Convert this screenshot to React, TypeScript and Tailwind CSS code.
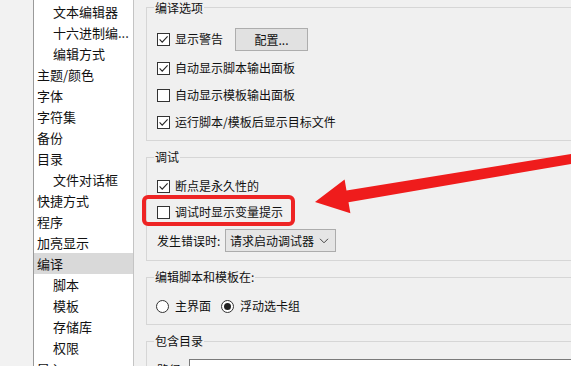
import React from "react";

const FONT = "font-['Noto_Sans_CJK_SC','Noto_Sans',sans-serif]";

const treeItems: { t: string; child?: boolean; sel?: boolean }[] = [
  { t: "文本编辑器", child: true },
  { t: "十六进制编...", child: true },
  { t: "编辑方式", child: true },
  { t: "主题/颜色" },
  { t: "字体" },
  { t: "字符集" },
  { t: "备份" },
  { t: "目录" },
  { t: "文件对话框", child: true },
  { t: "快捷方式" },
  { t: "程序" },
  { t: "加亮显示" },
  { t: "编译", sel: true },
  { t: "脚本", child: true },
  { t: "模板", child: true },
  { t: "存储库", child: true },
  { t: "权限", child: true },
  { t: "导入" },
];

function Check({ checked }: { checked: boolean }) {
  return (
    <span className="w-[13px] h-[13px] border border-[#333333] bg-white flex items-center justify-center shrink-0">
      {checked && (
        <svg width="11" height="11" viewBox="0 0 11 11">
          <path d="M1.6 5.4 L4.2 8.1 L9.6 2.4" fill="none" stroke="#222" strokeWidth="1.1" />
        </svg>
      )}
    </span>
  );
}

function CheckRow({ checked, label }: { checked: boolean; label: string }) {
  return (
    <div className="flex items-center h-[20px] gap-[5px]">
      <Check checked={checked} />
      <span className="leading-[20px]">{label}</span>
    </div>
  );
}

function Radio({ on }: { on: boolean }) {
  return (
    <span className="w-[13px] h-[13px] rounded-full border border-[#333333] bg-white flex items-center justify-center shrink-0">
      {on && <span className="w-[7px] h-[7px] rounded-full bg-[#222]" />}
    </span>
  );
}

function Legend({ children, nudge }: { children: React.ReactNode; nudge?: boolean }) {
  return (
    <legend className="ml-[7px] px-[1px] text-[12px] leading-[14px] text-[#111]">
      <span className={nudge ? "relative top-[1px]" : ""}>{children}</span>
    </legend>
  );
}

export default function App() {
  return (
    <div className={`relative w-[571px] h-[366px] overflow-hidden flex bg-[#f0f0f0] text-[#111] ${FONT}`}>
      {/* left strip */}
      <div className="w-[33px] shrink-0 bg-[#f2f2f2]" />
      {/* tree */}
      <div className="w-[101px] shrink-0 bg-white border-l border-l-[#9a9a9a] border-r border-r-[#c4c4c4] pt-[1px] text-[13px]">
        {treeItems.map((it, i) => (
          <div
            key={i}
            className={`h-[21px] leading-[21px] whitespace-nowrap ${it.child ? "pl-[19px]" : "pl-[3px]"} ${it.sel ? "bg-[#d9d9d9]" : ""}`}
          >
            {it.t}
          </div>
        ))}
      </div>
      {/* right panel */}
      <div className="flex-1 flex flex-col pl-[12px] text-[12px] min-w-0">
        <fieldset className="border border-[#d6d6d6] mr-[-40px]">
          <Legend nudge>编译选项</Legend>
          <div className="pl-[10px] pt-[13px] pb-[8px] flex flex-col gap-[7px]">
            <div className="flex items-center h-[24px]">
              <div className="flex items-center gap-[5px]">
                <Check checked />
                <span>显示警告</span>
              </div>
              <button className="ml-[12px] w-[73px] h-[23px] bg-[#e1e1e1] border border-[#adadad] text-[12px] leading-[21px] text-[#111]">
                配置...
              </button>
            </div>
            <CheckRow checked label="自动显示脚本输出面板" />
            <CheckRow checked={false} label="自动显示模板输出面板" />
            <CheckRow checked label="运行脚本/模板后显示目标文件" />
          </div>
        </fieldset>

        <fieldset className="border border-[#d6d6d6] mr-[-40px] mt-[9px]">
          <Legend>调试</Legend>
          <div className="pl-[10px] pt-[12px] pb-[8px] flex flex-col">
            <CheckRow checked label="断点是永久性的" />
            <div className="mt-[6px]">
              <CheckRow checked={false} label="调试时显示变量提示" />
            </div>
            <div className="mt-[7px] flex items-center h-[23px]">
              <span className="w-[68px]">发生错误时:</span>
              <div className="w-[111px] h-[23px] bg-[#e5e5e5] border border-[#acacac] flex items-center pl-[4px] pr-[6px]">
                <span className="flex-1 leading-[21px]">请求启动调试器</span>
                <svg width="10" height="6" viewBox="0 0 10 6">
                  <path d="M1 0.8 L5 4.8 L9 0.8" fill="none" stroke="#444" strokeWidth="1" />
                </svg>
              </div>
            </div>
          </div>
        </fieldset>

        <fieldset className="border border-[#d6d6d6] mr-[-40px] mt-[9px]">
          <Legend>编辑脚本和模板在:</Legend>
          <div className="pl-[9px] pt-[12px] pb-[8px] flex items-center h-[40px]">
            <div className="flex items-center gap-[6px] h-[20px]">
              <Radio on={false} />
              <span>主界面</span>
            </div>
            <div className="flex items-center gap-[6px] h-[20px] ml-[10px]">
              <Radio on />
              <span>浮动选卡组</span>
            </div>
          </div>
        </fieldset>

        <fieldset className="border border-[#d6d6d6] mr-[-40px] mt-[9px]">
          <Legend>包含目录</Legend>
          <div className="pl-[10px] pt-[11px] pb-[8px] flex items-start">
            <span className="w-[32px] leading-[20px] mt-[1px]">路径:</span>
            <div className="flex-1 h-[22px] bg-white border border-[#7a7a7a]" />
          </div>
        </fieldset>
      </div>

      {/* red highlight box */}
      <div className="absolute left-[142px] top-[195px] w-[153px] h-[31px] border-[4px] border-[#ee2424] rounded-[6px]" />
      {/* red arrow */}
      <svg className="absolute left-0 top-0 pointer-events-none" width="571" height="366" viewBox="0 0 571 366">
        <polygon
          points="315,202 344.6,179.6 346.5,190.5 571,154 571,164 348.5,202.3 350.4,213.2"
          fill="#ef1c1c"
        />
      </svg>
    </div>
  );
}
